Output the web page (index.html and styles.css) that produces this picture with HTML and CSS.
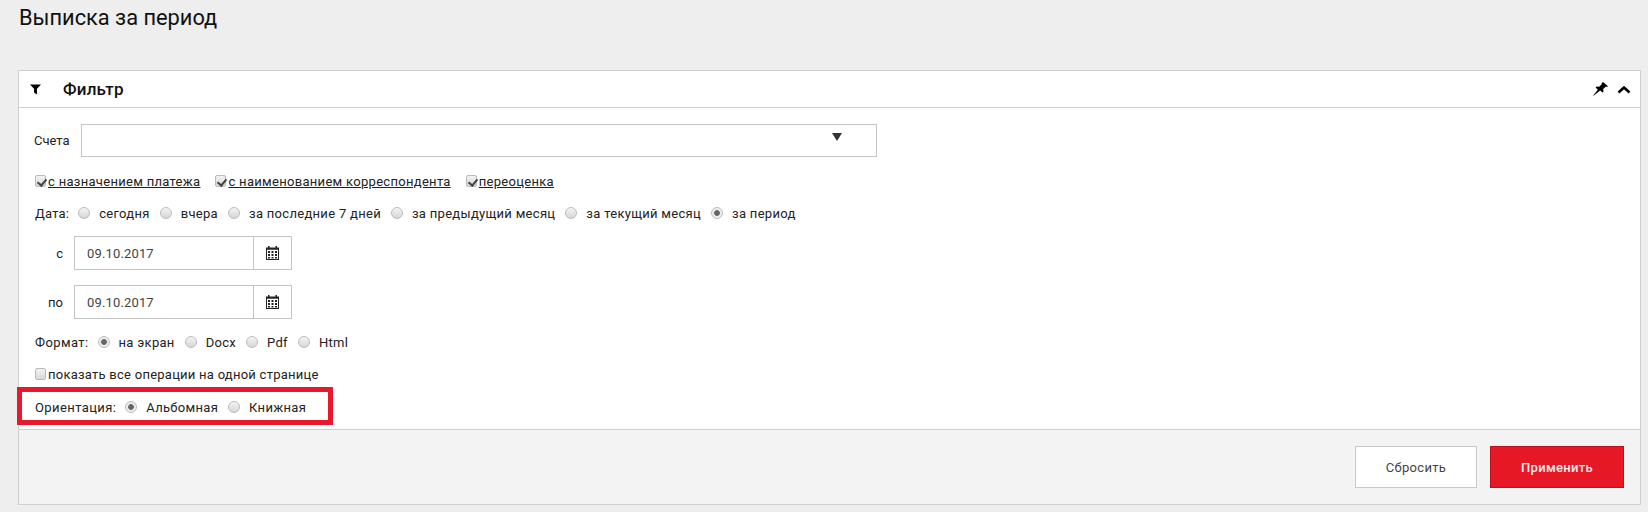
FILE: index.html
```html
<!DOCTYPE html>
<html lang="ru">
<head>
<meta charset="utf-8">
<title>Выписка за период</title>
<link rel="stylesheet" href="styles.css">
</head>
<body>
<h1 class="title">Выписка за период</h1>
<section class="panel">
  <header class="panel-head">
    <svg class="i-filter" viewBox="0 0 12 11"><path d="M0 0h12L7.600 4.800V11L4.400 8.800V4.800z"/></svg>
    <h2 class="panel-title">Фильтр</h2>
    <svg class="i-pin" viewBox="0 0 15 14"><path d="M10 0l5 4.200-1 .8-1-.4-2.800 2.500.3 2.500-1 1-2.400-2.200L.6 13.800l-.4-.4L4.800 7.800 2.600 5.400l1-1 2.500.4L8.800 2.200l-.2-.9z"/></svg>
    <svg class="i-chevron" viewBox="0 0 14 8"><path d="M1.500 6.500L7 1.500l5.500 5" fill="none" stroke="#000" stroke-width="2.600"/></svg>
  </header>
  <div class="panel-body">
    <div class="row-account">
      <label class="lbl-account">Счета</label>
      <div class="select"><svg class="i-caret" viewBox="0 0 10 8"><path d="M0 0h10L5 8z"/></svg></div>
    </div>
    <div class="row-checks">
      <label class="check"><input type="checkbox" checked><span>с назначением платежа</span></label>
      <label class="check"><input type="checkbox" checked><span>с наименованием корреспондента</span></label>
      <label class="check"><input type="checkbox" checked><span>переоценка</span></label>
    </div>
    <div class="row-radio row-date">
      <span class="cap">Дата:</span>
      <label class="radio"><input type="radio" name="d">сегодня</label>
      <label class="radio"><input type="radio" name="d">вчера</label>
      <label class="radio"><input type="radio" name="d">за последние 7 дней</label>
      <label class="radio"><input type="radio" name="d">за предыдущий месяц</label>
      <label class="radio"><input type="radio" name="d">за текущий месяц</label>
      <label class="radio"><input type="radio" name="d" checked>за период</label>
    </div>
    <div class="row-field">
      <label class="lbl-field">с</label>
      <div class="date"><span class="date-value">09.10.2017</span><span class="date-btn"><svg class="i-cal" viewBox="0 0 13 14"><use href="#cal"/></svg></span></div>
    </div>
    <div class="row-field">
      <label class="lbl-field">по</label>
      <div class="date"><span class="date-value">09.10.2017</span><span class="date-btn"><svg class="i-cal" viewBox="0 0 13 14"><use href="#cal"/></svg></span></div>
    </div>
    <div class="row-radio row-format">
      <span class="cap">Формат:</span>
      <label class="radio"><input type="radio" name="f" checked>на экран</label>
      <label class="radio"><input type="radio" name="f">Docx</label>
      <label class="radio"><input type="radio" name="f">Pdf</label>
      <label class="radio"><input type="radio" name="f">Html</label>
    </div>
    <div class="row-all">
      <label class="check plain"><input type="checkbox"><span>показать все операции на одной странице</span></label>
    </div>
    <div class="row-radio row-orient">
      <span class="cap">Ориентация:</span>
      <label class="radio"><input type="radio" name="o" checked>Альбомная</label>
      <label class="radio"><input type="radio" name="o">Книжная</label>
      <span class="highlight"></span>
    </div>
  </div>
  <footer class="panel-foot">
    <button class="btn btn-reset" type="button">Сбросить</button>
    <button class="btn btn-apply" type="button">Применить</button>
  </footer>
</section>
<svg class="defs" width="0" height="0"><defs>
  <g id="cal"><path fill="#222" d="M2 0h1.500v1.500h6V0H11v1.500h2V14H0V1.500h2zM1 3.800V13h11V3.800z"/><path fill="#222" d="M2 5h2v2H2zM5.500 5h2v2h-2zM9 5h2v2H9zM2 8h2v2H2zM5.500 8h2v2h-2zM9 8h2v2H9zM2 11h2v1.500H2zM5.500 11h2v1.500h-2zM9 11h2v1.500H9z"/></g>
</defs></svg>
</body>
</html>
```
FILE: styles.css
```css
* { box-sizing: border-box; }
html, body { height: 100%; }
body {
  margin: 0;
  padding: 0 8px 0 18px;
  background: #eeeeee;
  color: #222;
  font-family: Roboto, "Noto Sans", sans-serif;
  font-size: 13px;
  overflow: hidden;
}
.title {
  margin: 0;
  height: 70px;
  padding: 4px 0 0 1px;
  font-size: 21.8px;
  line-height: 28px;
  font-weight: 400;
  color: #111;
}
.panel {
  width: 1623px;
  height: 435px;
  background: #fff;
  border: 1px solid #cfcfcf;
  display: flex;
  flex-direction: column;
}
.panel-head {
  height: 37px;
  flex: none;
  border-bottom: 1px solid #cfcfcf;
  display: flex;
  align-items: center;
  padding: 0 9px 0 11px;
}
.i-filter { width: 11px; height: 11px; margin-top: 1px; }
.panel-title {
  margin: 0 auto 0 22px;
  font-size: 17px;
  line-height: 20px;
  font-weight: 500;
  color: #111;
  letter-spacing: .2px;
}
.i-pin { width: 15px; height: 14px; margin-right: 9px; }
.i-chevron { width: 14px; height: 8px; margin-top: 1px; }
.panel-body { flex: 1; padding: 16px 0 0 14px; position: relative; }
.row-account { display: flex; align-items: center; height: 33px; }
.lbl-account { width: 47px; margin-left: 1px; }
.select {
  width: 796px;
  height: 33px;
  border: 1px solid #c4c4c4;
  position: relative;
}
.i-caret { position: absolute; left: 750px; top: 8px; width: 10px; height: 8px; fill: #333; }
.row-checks {
  display: flex;
  gap: 15px;
  height: 18px;
  margin-top: 15px;
  padding-left: 2px;
  align-items: center;
}
.check { display: flex; align-items: center; }
.check span { text-decoration: underline; letter-spacing: .3px; }
.check.plain span { text-decoration: none; letter-spacing: .25px; }
.check input {
  appearance: none;
  width: 11px;
  height: 12px;
  margin: 0 2px 0 0;
  border: 1px solid #bbb;
  border-radius: 2px;
  background: linear-gradient(#f2f2f2, #d8d8d8);
  position: relative;
}
.check input:checked::after {
  content: "";
  position: absolute;
  left: 3px;
  top: 1px;
  width: 4px;
  height: 7px;
  border: solid #444;
  border-width: 0 2px 2px 0;
  transform: rotate(40deg);
}
.row-radio { display: flex; align-items: center; height: 18px; position: relative; padding-left: 2px; }
.row-date { margin-top: 14px; }
.cap { margin-right: 9px; letter-spacing: .4px; }
.row-date .cap { letter-spacing: .2px; }
.radio { display: flex; align-items: center; margin-right: 10px; letter-spacing: .3px; }
.radio input {
  appearance: none;
  width: 12px;
  height: 12px;
  margin: 0 9px 0 0;
  border: 1px solid #bdbdbd;
  border-radius: 50%;
  background: linear-gradient(#f4f4f4, #d6d6d6);
  flex: none;
}
.radio input:checked { background: radial-gradient(circle, #666 0 2.5px, #ececec 3.2px); }
.row-field { display: flex; align-items: center; height: 34px; margin-top: 14px; }
.row-field + .row-field { margin-top: 15px; }
.lbl-field { width: 30px; text-align: right; margin-right: 11px; }
.date {
  width: 218px;
  height: 34px;
  border: 1px solid #c4c4c4;
  display: flex;
}
.date-value { width: 178px; padding-left: 12px; line-height: 33px; color: #444; letter-spacing: .15px; }
.date-btn {
  flex: 1;
  border-left: 1px solid #c4c4c4;
  display: flex;
  align-items: center;
  justify-content: center;
}
.i-cal { width: 13px; height: 14px; }
.row-format { margin-top: 14px; }
.row-all { height: 18px; margin-top: 14px; display: flex; align-items: center; padding-left: 2px; }
.row-orient { margin-top: 15px; }
.highlight {
  position: absolute;
  left: -16px;
  top: -11px;
  width: 316px;
  height: 38px;
  border: 5px solid #e8192c;
  pointer-events: none;
}
.panel-foot {
  height: 75px;
  flex: none;
  background: #f3f3f3;
  border-top: 1px solid #cfcfcf;
  display: flex;
  justify-content: flex-end;
  align-items: flex-start;
  gap: 13px;
  padding: 16px 16px 0 0;
}
.btn {
  height: 42px;
  font: 500 13px Roboto, "Noto Sans", sans-serif;
  letter-spacing: .3px;
}
.btn-reset { width: 122px; background: #fff; border: 1px solid #c8c8c8; color: #444; font-weight: 400; }
.btn-apply { width: 134px; background: #e61826; border: 1px solid #b5121e; color: #ffecec; }
.defs { position: absolute; }
```
